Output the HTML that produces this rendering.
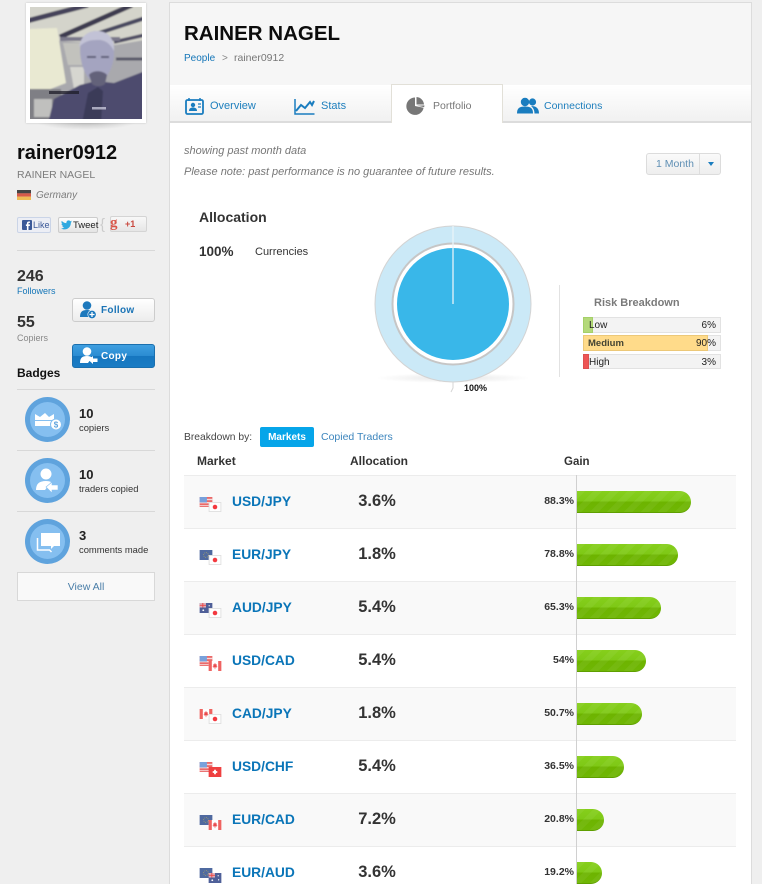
<!DOCTYPE html>
<html style="height:884px;overflow:hidden"><head><meta charset="utf-8"><style>
*{box-sizing:border-box}
html,body{margin:0;padding:0}
body{width:762px;height:884px;overflow:hidden;position:relative;background:#efefef;font-family:"Liberation Sans",Arial,sans-serif;color:#222}
#w{position:absolute;left:0;top:0;width:762px;height:884px;overflow:hidden}
.a{position:absolute;white-space:nowrap}
.l{position:absolute;left:17px;width:138px;height:1px;background:#d8d8d8}
.row{position:absolute;left:184px;width:552px;height:53px;border-top:1px solid #ececec}
.row.o{background:#f9f9f9}
.row .f{position:absolute;left:15px;top:21px;filter:blur(.35px);opacity:.9}
.row .m{position:absolute;left:48px;top:18px;font-size:13.8px;font-weight:bold;color:#0a75b8;line-height:16px}
.row .p{position:absolute;left:144px;width:98px;text-align:center;top:15px;font-size:16.5px;font-weight:bold;color:#333;line-height:20px}
.row .g{position:absolute;right:162px;top:19px;font-size:10.5px;line-height:13px;font-weight:bold;color:#333}
.bar{position:absolute;left:393px;top:15px;height:22px;border-radius:0 11px 11px 0;border-bottom:1px solid #5f9f00;background:repeating-linear-gradient(135deg,rgba(255,255,255,.05) 0 6px,rgba(255,255,255,0) 6px 12px),linear-gradient(#86cf1c 0,#7ec816 50%,#6db400 50%,#6fb604 100%)}
.risk{position:absolute;left:583px;width:138px;background:#f3f3f3;border:1px solid #e2e2e2;font-size:10px;line-height:14px;color:#222}
.risk i{position:absolute;left:-1px;top:-1px;bottom:-1px;display:block}
.risk b{position:absolute;font-weight:normal;top:1px}
</style></head><body><div id="w">

<svg width="0" height="0" style="position:absolute"><defs>
<symbol id="us" viewBox="0 0 14 11"><rect width="14" height="11" fill="#e85a5a"/><rect y="2" width="14" height="1.500" fill="#f6d5d5"/><rect y="5.500" width="14" height="1.500" fill="#f6d5d5"/><rect y="9" width="14" height="1" fill="#f6d5d5"/><rect width="8" height="6" fill="#6a97d8"/></symbol>
<symbol id="eu" viewBox="0 0 14 11"><rect width="14" height="11" fill="#3d5a96"/><circle cx="7" cy="5.500" r="2.600" fill="none" stroke="#a8a050" stroke-width=".8" stroke-dasharray="1 1"/></symbol>
<symbol id="au" viewBox="0 0 14 11"><rect width="14" height="11" fill="#3d4f8e"/><rect width="7" height="5" fill="#d9a6b2"/><path d="M3.500 0v5M0 2.500h7" stroke="#e33" stroke-width="1"/><circle cx="4" cy="8" r="1" fill="#fff"/><circle cx="10.500" cy="3" r=".7" fill="#fff"/><circle cx="11" cy="7.500" r=".7" fill="#fff"/></symbol>
<symbol id="jp" viewBox="0 0 14 11"><rect x=".5" y=".5" width="13" height="10" fill="#fff" stroke="#ddd"/><circle cx="7" cy="5.500" r="2.500" fill="#f3252b"/></symbol>
<symbol id="ca" viewBox="0 0 14 11"><rect width="14" height="11" fill="#fff"/><rect width="3.500" height="11" fill="#ee5350"/><rect x="10.500" width="3.500" height="11" fill="#ee5350"/><path d="M7 2l1 2 1-.5-.3 2.500 1-.2-.7 1.200H7.300V9h-.6V7H4.900l-.6-1.200 1 .2L5 3.500 6 4z" fill="#e8383a"/></symbol>
<symbol id="ch" viewBox="0 0 14 11"><rect width="14" height="11" fill="#ee2c2c"/><path d="M6 3h2v1.500h1.500v2H8V8H6V6.500H4.500v-2H6z" fill="#fff"/></symbol>
<filter id="bl"><feGaussianBlur stdDeviation=".9"/></filter>
</defs></svg>

<!-- Photo -->
<div class="a" style="left:36px;top:122px;width:100px;height:8px;background:radial-gradient(ellipse at top,rgba(0,0,0,.2),rgba(0,0,0,0) 70%)"></div>
<div class="a" style="left:26px;top:3px;width:120px;height:120px;background:#fff;box-shadow:0 0 2px rgba(0,0,0,.2)"></div>
<svg class="a" style="left:30px;top:7px" width="112" height="112" viewBox="0 0 112 112">
<clipPath id="ph"><rect width="112" height="112"/></clipPath>
<g clip-path="url(#ph)"><g filter="url(#bl)">
<rect x="-3" y="-3" width="118" height="118" fill="#a9a9ad"/>
<path d="M-3 -3h118v36l-30 5-52-4H-3z" fill="#d4d4cb"/>
<path d="M-3 14L58 -2" stroke="#45425a" stroke-width="5"/>
<path d="M30 30L102 -2" stroke="#3d3a50" stroke-width="5"/>
<path d="M66 27L115 11" stroke="#4a4860" stroke-width="4"/>
<path d="M84 35L115 28" stroke="#504e64" stroke-width="3.500"/>
<path d="M30 32H90" stroke="#7a788a" stroke-width="4"/>
<path d="M-3 22l30 -1 9 55 -18 7H-3z" fill="#e9e9d2"/>
<path d="M33 36h20v22H38z" fill="#c2c2bd"/>
<path d="M40 60h14v22H44z" fill="#d6d6d0"/>
<path d="M86 52H115" stroke="#595868" stroke-width="3"/>
<path d="M-3 82h34v32H-3z" fill="#7f7f85"/>
<path d="M4 92h18v18H4z" fill="#c0c0be"/>
<path d="M18 116L24 92L50 78L66 74L84 76L115 64V116z" fill="#4d4c6e"/>
<path d="M52 116l6-30 10-6 5 4-2 32z" fill="#3b3a58"/>
<path d="M50 44c0-14 8-20 17-20 11 0 18 8 17 24-1 14-8 26-17 28-9-1-16-14-17-32z" fill="#a4a4c0"/>
<path d="M49 40c2-12 10-16 18-16 10 0 18 7 17 20-4-8-10-12-18-11-7 0-12 2-17 7z" fill="#c2c2d6"/>
<path d="M57 50h9M71 50h8" stroke="#5f5e78" stroke-width="2"/>
<path d="M59 68c3-5 14-5 18 0l-2 9c-4 3-9 3-13 0z" fill="#63627a"/>
</g>
<rect x="19" y="84" width="30" height="3" fill="#1e1c28" opacity=".75"/>
<rect x="62" y="100" width="14" height="2.500" fill="#d8d8e8" opacity=".7"/>
</g></svg>

<!-- Sidebar -->
<div class="a" style="left:17px;top:141px;font-size:20px;font-weight:bold;color:#0d0d0d;line-height:24px">rainer0912</div>
<div class="a" style="left:17px;top:169px;font-size:10.500px;color:#7c7c7c;line-height:13px">RAINER NAGEL</div>
<svg class="a" style="left:17px;top:190px" width="14" height="10"><rect width="14" height="3.400" fill="#444"/><rect y="3.300" width="14" height="3.400" fill="#d65a4a"/><rect y="6.600" width="14" height="3.400" fill="#eebb55"/></svg>
<div class="a" style="left:36px;top:190px;font-size:10px;font-style:italic;color:#7c7c7c;line-height:12px">Germany</div>

<div class="a" style="left:17px;top:217px;width:34px;height:16px;background:#eceef5;border:1px solid #cad4e7;border-radius:2px"></div>
<svg class="a" style="left:22px;top:220px" width="10" height="10"><rect width="10" height="10" rx="1" fill="#3b5998"/><path d="M6.500 10V6h1.300l.2-1.600H6.500V3.600c0-.5.200-.7.700-.7H8V1.500H6.800C5.500 1.500 4.900 2.200 4.900 3.400v1H3.900V6h1v4z" fill="#fff"/></svg>
<div class="a" style="left:33px;top:219px;font-size:9px;color:#3b5998;line-height:12px">Like</div>

<div class="a" style="left:58px;top:217px;width:40px;height:16px;background:linear-gradient(#fdfdfd,#e4e4e4);border:1px solid #ccc;border-radius:2px"></div>
<svg class="a" style="left:61px;top:220px" width="11" height="10" viewBox="0 0 24 20"><path d="M24 2.400c-.9.400-1.800.700-2.800.800 1-.6 1.800-1.600 2.200-2.700-1 .6-2 1-3.100 1.200C19.300.6 18 0 16.600 0c-2.700 0-4.900 2.200-4.900 4.900 0 .4 0 .8.100 1.100C7.700 5.800 4.100 3.800 1.700.9 1.200 1.700 1 2.500 1 3.400c0 1.700.9 3.200 2.200 4.100-.8 0-1.600-.2-2.200-.6v.1c0 2.400 1.700 4.400 3.900 4.800-.4.100-.8.200-1.300.2-.3 0-.6 0-.9-.1.600 2 2.400 3.400 4.600 3.400-1.700 1.300-3.800 2.100-6.100 2.100-.4 0-.8 0-1.200-.1C2.200 18.700 4.800 19.500 7.500 19.500c9.100 0 14-7.500 14-14v-.6c1-.7 1.800-1.600 2.500-2.500z" fill="#2fa9e0"/></svg>
<div class="a" style="left:73px;top:220px;font-size:9.500px;color:#222;line-height:12px">Tweet</div>
<div class="a" style="left:100px;top:216px;font-size:15px;color:#ccc;line-height:17px">{</div>
<div class="a" style="left:110px;top:216px;width:37px;height:16px;background:linear-gradient(#f8f8f8,#e6e6e6);border:1px solid #d4d4d4;border-radius:2px"></div>
<div class="a" style="left:110px;top:214px;font-size:15px;font-weight:bold;color:#d8564a;line-height:18px;font-family:'Liberation Serif',serif">g</div>
<div class="a" style="left:125px;top:218px;font-size:9px;font-weight:bold;color:#c9473d;line-height:12px">+1</div>

<div class="l" style="top:250px"></div>
<div class="a" style="left:17px;top:267px;font-size:16px;font-weight:bold;color:#333;line-height:19px">246</div>
<div class="a" style="left:17px;top:285px;font-size:9px;color:#1576b8;line-height:12px">Followers</div>
<div class="a" style="left:17px;top:313px;font-size:16px;font-weight:bold;color:#333;line-height:19px">55</div>
<div class="a" style="left:17px;top:332px;font-size:9px;color:#888;line-height:12px">Copiers</div>

<div class="a" style="left:72px;top:298px;width:83px;height:24px;background:linear-gradient(#fff,#ececec);border:1px solid #ccc;border-radius:3px"></div>
<svg class="a" style="left:80px;top:301px" width="17" height="18" viewBox="0 0 17 18"><circle cx="7" cy="4.500" r="4.300" fill="#1d79bd"/><path d="M0 16c0-5 2-7 7-7 3 0 5 1 6 3l-4 4z" fill="#1d79bd"/><circle cx="12" cy="13.500" r="4.200" fill="#1d79bd" stroke="#fff" stroke-width=".6"/><path d="M12 11v5M9.500 13.500h5" stroke="#fff" stroke-width="1.300"/></svg>
<div class="a" style="left:101px;top:305px;font-size:10px;font-weight:bold;color:#1b74b6;line-height:12px;letter-spacing:.3px">Follow</div>

<div class="a" style="left:72px;top:344px;width:83px;height:24px;background:linear-gradient(#3f9fe0 0,#2a8bd2 50%,#1676bf 50%,#1a7cc4 100%);border:1px solid #1a6fae;border-radius:3px"></div>
<svg class="a" style="left:80px;top:347px" width="18" height="17" viewBox="0 0 18 17"><circle cx="7" cy="4.500" r="4.300" fill="#fff"/><path d="M0 16c0-5 2-7 7-7 2 0 4 .5 5 1.500L8 16z" fill="#fff"/><path d="M8.500 13l4.500-4v2.500h4.500v3.500H13v2z" fill="#fff"/></svg>
<div class="a" style="left:101px;top:351px;font-size:10px;font-weight:bold;color:#fff;line-height:12px;letter-spacing:.3px">Copy</div>

<div class="a" style="left:17px;top:366px;font-size:12px;font-weight:bold;color:#111;line-height:14px">Badges</div>
<div class="l" style="top:389px"></div>
<div class="l" style="top:450px"></div>
<div class="l" style="top:511px"></div>

<svg class="a" style="left:25px;top:397px" width="45" height="45"><circle cx="22.500" cy="22.500" r="22.500" fill="#5fa3dd"/><circle cx="22.500" cy="22.500" r="17.500" fill="#85bff0"/><path d="M10 17l5 3 5-4 4 4 5-3v6H10zM10 24h19v5H10z" fill="#fff"/><circle cx="31" cy="27.500" r="5.500" fill="#fff" stroke="#85bff0"/><text x="31" y="30.500" font-size="8" font-weight="bold" text-anchor="middle" fill="#5fa3dd" font-family="Liberation Sans">$</text></svg>
<svg class="a" style="left:25px;top:458px" width="45" height="45"><circle cx="22.500" cy="22.500" r="22.500" fill="#5fa3dd"/><circle cx="22.500" cy="22.500" r="17.500" fill="#85bff0"/><circle cx="21" cy="16" r="5.500" fill="#fff"/><path d="M11 32c0-6 3-9 10-9 2 0 4 .4 5 1l-6 8z" fill="#fff"/><path d="M21 29l6-5v3h6v5h-6v3z" fill="#fff" stroke="#85bff0" stroke-width=".6"/></svg>
<svg class="a" style="left:25px;top:519px" width="45" height="45"><circle cx="22.500" cy="22.500" r="22.500" fill="#5fa3dd"/><circle cx="22.500" cy="22.500" r="17.500" fill="#85bff0"/><path d="M16 14h19v13h-6l-3 3v-3H16z" fill="#fff"/><path d="M12.500 19v12h12l2 2" fill="none" stroke="#fff" stroke-width="1.500"/></svg>

<div class="a" style="left:79px;top:406px;font-size:13px;font-weight:bold;color:#222;line-height:16px">10</div>
<div class="a" style="left:79px;top:422px;font-size:9.400px;color:#333;line-height:12px">copiers</div>
<div class="a" style="left:79px;top:467px;font-size:13px;font-weight:bold;color:#222;line-height:16px">10</div>
<div class="a" style="left:79px;top:483px;font-size:9.400px;color:#333;line-height:12px">traders copied</div>
<div class="a" style="left:79px;top:528px;font-size:13px;font-weight:bold;color:#222;line-height:16px">3</div>
<div class="a" style="left:79px;top:544px;font-size:9.400px;color:#333;line-height:12px">comments made</div>

<div class="a" style="left:17px;top:572px;width:138px;height:29px;background:#f9f9f9;border:1px solid #d8d8d8;text-align:center;font-size:10.500px;color:#4a7ea8;line-height:28px">View All</div>

<!-- Main -->
<div class="a" style="left:169px;top:2px;width:583px;height:890px;background:#fff;border:1px solid #dcdcdc"></div>
<div class="a" style="left:170px;top:3px;width:581px;height:82px;background:#f6f6f6"></div>
<div class="a" style="left:170px;top:85px;width:581px;height:38px;background:linear-gradient(#fff,#f1f1f1);border-bottom:2px solid #dcdcdc"></div>
<div class="a" style="left:391px;top:84px;width:112px;height:39px;background:#fff;border:1px solid #e2e0d8;border-bottom:none"></div>

<div class="a" style="left:184px;top:22px;font-size:20.500px;font-weight:bold;color:#0c0c0c;line-height:24px">RAINER NAGEL</div>
<div class="a" style="left:184px;top:52px;font-size:10px;color:#1576b8;line-height:13px">People</div>
<div class="a" style="left:222px;top:52px;font-size:10px;color:#888;line-height:13px">&gt;</div>
<div class="a" style="left:234px;top:52px;font-size:10.500px;color:#777;line-height:13px">rainer0912</div>

<svg class="a" style="left:185px;top:97px" width="19" height="18" viewBox="0 0 19 18"><rect x="1" y="3" width="17" height="14" rx="1.500" fill="none" stroke="#1a7dbf" stroke-width="1.800"/><path d="M4 1v3M15 1v3" stroke="#1a7dbf" stroke-width="1.500"/><circle cx="8" cy="8" r="2.200" fill="#1a7dbf"/><path d="M4 14c0-2.500 1.500-3.500 4-3.500s4 1 4 3.500z" fill="#1a7dbf"/><path d="M13 7h3M13 10h3" stroke="#1a7dbf" stroke-width="1.200"/></svg>
<div class="a" style="left:210px;top:100px;font-size:11px;color:#1e7fbd;line-height:13px">Overview</div>
<svg class="a" style="left:294px;top:98px" width="21" height="17" viewBox="0 0 21 17"><path d="M1 1v15h19.500" fill="none" stroke="#1a7dbf" stroke-width="1.500"/><path d="M2 13l5-6 4 3 5-6 2 3 2-4" fill="none" stroke="#1a7dbf" stroke-width="2"/></svg>
<div class="a" style="left:321px;top:100px;font-size:11px;color:#1e7fbd;line-height:13px">Stats</div>
<svg class="a" style="left:406px;top:96px" width="20" height="20" viewBox="0 0 20 20"><path d="M9 1.500a8.700 8.700 0 1 0 8.600 10.300L9 10z" fill="#777"/><path d="M10.500 1a8 8 0 0 1 7.500 7.500h-7.500z" fill="#777"/><path d="M11 9.700l7.400-.3-.2 1.700z" fill="#777"/></svg>
<div class="a" style="left:433px;top:100px;font-size:10.500px;color:#777;line-height:13px">Portfolio</div>
<svg class="a" style="left:517px;top:97px" width="22" height="17" viewBox="0 0 22 17"><circle cx="8" cy="5" r="4.200" fill="#1a7dbf"/><path d="M0 16.500c0-5 2-7 8-7s8 2 8 7z" fill="#1a7dbf"/><circle cx="15.500" cy="5" r="3.600" fill="#1a7dbf"/><path d="M14 9c5 0 8 2 8 7.500h-4.500c0-3-1-5.500-3.500-7.500z" fill="#1a7dbf"/></svg>
<div class="a" style="left:544px;top:100px;font-size:10.500px;color:#1e7fbd;line-height:13px">Connections</div>

<div class="a" style="left:184px;top:145px;font-size:11px;font-style:italic;color:#777;line-height:13px">showing past month data</div>
<div class="a" style="left:184px;top:166px;font-size:11px;font-style:italic;color:#777;line-height:13px">Please note: past performance is no guarantee of future results.</div>

<div class="a" style="left:646px;top:153px;width:75px;height:22px;background:linear-gradient(#fafafa,#eeeeee);border:1px solid #dcdcdc;border-radius:3px"></div>
<div class="a" style="left:699px;top:154px;width:1px;height:20px;background:#ddd"></div>
<div class="a" style="left:656px;top:158px;font-size:10.500px;color:#5f8fb4;line-height:13px">1 Month</div>
<div class="a" style="left:708px;top:162px;width:0;height:0;border:3.500px solid transparent;border-top:4px solid #1a7dbf;border-bottom:none"></div>

<div class="a" style="left:199px;top:209px;font-size:14px;font-weight:bold;color:#333;line-height:16px">Allocation</div>
<div class="a" style="left:199px;top:243px;font-size:13.500px;font-weight:bold;color:#333;line-height:17px">100%</div>
<div class="a" style="left:255px;top:246px;font-size:11px;color:#333;line-height:13px">Currencies</div>

<div class="a" style="left:375px;top:373px;width:156px;height:10px;background:radial-gradient(ellipse at center,rgba(0,0,0,.1),rgba(0,0,0,0) 70%)"></div>
<svg class="a" style="left:370px;top:220px" width="170" height="175" viewBox="0 0 170 175">
<circle cx="83" cy="84" r="78" fill="#cbe9f7" stroke="#d3d3d3" stroke-width="1"/>
<circle cx="83" cy="84" r="60.500" fill="#fff" stroke="#c6c6c6" stroke-width="2"/>
<circle cx="83" cy="84" r="56" fill="#39b7e9"/>
<path d="M83 6v78" stroke="#e8f4f9" stroke-width="1.300"/>
<path d="M83 162v6l-2 4" stroke="#d5d5d5" stroke-width="1" fill="none"/>
</svg>
<div class="a" style="left:464px;top:383px;font-size:9px;font-weight:bold;color:#111;line-height:11px">100%</div>

<div class="a" style="left:559px;top:285px;width:1px;height:92px;background:#e2e2e2"></div>
<div class="a" style="left:594px;top:296px;font-size:11px;font-weight:bold;color:#7a7a7a;line-height:14px">Risk Breakdown</div>

<div class="risk" style="top:317px;height:16px"><i style="width:10px;background:#b4d97a;border:1px solid #a5d068"></i><b style="left:5px">Low</b><b style="right:4px">6%</b></div>
<div class="risk" style="top:335px;height:16px"><i style="width:125px;background:#ffdb8a;border:1px solid #ecc878"></i><b style="left:4px;font-weight:bold;font-size:9.500px;color:#443">Medium</b><b style="right:4px">90%</b></div>
<div class="risk" style="top:354px;height:15px"><i style="width:6px;background:#ee5555;border:1px solid #dd5050"></i><b style="left:5px">High</b><b style="right:4px">3%</b></div>

<div class="a" style="left:184px;top:431px;font-size:10.300px;color:#444;line-height:13px">Breakdown by:</div>
<div class="a" style="left:260px;top:427px;width:54px;height:20px;background:#06a5e9;border-radius:2px;color:#fff;font-size:10px;font-weight:bold;text-align:center;line-height:21px">Markets</div>
<div class="a" style="left:321px;top:431px;font-size:10.500px;color:#3c85bd;line-height:13px">Copied Traders</div>

<div class="a" style="left:197px;top:454px;font-size:12px;font-weight:bold;color:#333;line-height:14px">Market</div>
<div class="a" style="left:350px;top:454px;font-size:12px;font-weight:bold;color:#333;line-height:14px">Allocation</div>
<div class="a" style="left:564px;top:455px;font-size:11.500px;font-weight:bold;color:#333;line-height:14px">Gain</div>

<div class="row o" style="top:475px"><svg class="f" width="24" height="16"><use href="#us" width="14" height="10" x="0" y="0"/><use href="#jp" width="14" height="10" x="9" y="5"/></svg><div class="m">USD/JPY</div><div class="p">3.6%</div><div class="g">88.3%</div><div class="bar" style="width:114px"></div></div>
<div class="row" style="top:528px"><svg class="f" width="24" height="16"><use href="#eu" width="14" height="10" x="0" y="0"/><use href="#jp" width="14" height="10" x="9" y="5"/></svg><div class="m">EUR/JPY</div><div class="p">1.8%</div><div class="g">78.8%</div><div class="bar" style="width:101px"></div></div>
<div class="row o" style="top:581px"><svg class="f" width="24" height="16"><use href="#au" width="14" height="10" x="0" y="0"/><use href="#jp" width="14" height="10" x="9" y="5"/></svg><div class="m">AUD/JPY</div><div class="p">5.4%</div><div class="g">65.3%</div><div class="bar" style="width:84px"></div></div>
<div class="row" style="top:634px"><svg class="f" width="24" height="16"><use href="#us" width="14" height="10" x="0" y="0"/><use href="#ca" width="14" height="10" x="9" y="5"/></svg><div class="m">USD/CAD</div><div class="p">5.4%</div><div class="g">54%</div><div class="bar" style="width:69px"></div></div>
<div class="row o" style="top:687px"><svg class="f" width="24" height="16"><use href="#ca" width="14" height="10" x="0" y="0"/><use href="#jp" width="14" height="10" x="9" y="5"/></svg><div class="m">CAD/JPY</div><div class="p">1.8%</div><div class="g">50.7%</div><div class="bar" style="width:65px"></div></div>
<div class="row" style="top:740px"><svg class="f" width="24" height="16"><use href="#us" width="14" height="10" x="0" y="0"/><use href="#ch" width="14" height="10" x="9" y="5"/></svg><div class="m">USD/CHF</div><div class="p">5.4%</div><div class="g">36.5%</div><div class="bar" style="width:47px"></div></div>
<div class="row o" style="top:793px"><svg class="f" width="24" height="16"><use href="#eu" width="14" height="10" x="0" y="0"/><use href="#ca" width="14" height="10" x="9" y="5"/></svg><div class="m">EUR/CAD</div><div class="p">7.2%</div><div class="g">20.8%</div><div class="bar" style="width:27px"></div></div>
<div class="row" style="top:846px"><svg class="f" width="24" height="16"><use href="#eu" width="14" height="10" x="0" y="0"/><use href="#au" width="14" height="10" x="9" y="5"/></svg><div class="m">EUR/AUD</div><div class="p">3.6%</div><div class="g">19.2%</div><div class="bar" style="width:25px"></div></div>

<div class="a" style="left:576px;top:475px;width:1px;height:409px;background:#d0d0d0"></div>
</div></body></html>
